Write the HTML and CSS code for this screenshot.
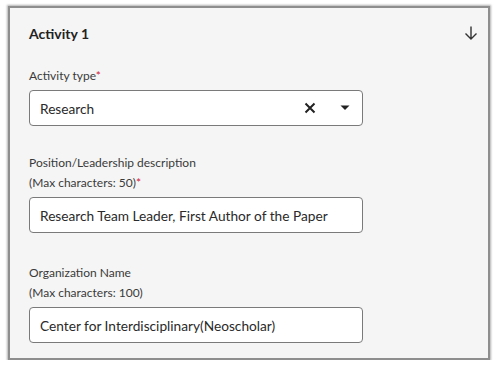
FILE: index.html
```html
<!DOCTYPE html>
<html>
<head>
    <title>Activity</title>
    <link rel="stylesheet" href="styles.css">
</head>
<body>
    <div class="card">
        <div class="card-header">
            <h2>Activity 1</h2>
            <svg class="collapse-icon" width="16" height="16" viewBox="0 0 16 16">
                <path d="M8 1.5 V14 M2.5 8.5 L8 14 L13.5 8.5" fill="none" stroke="#333" stroke-width="1.4"/>
            </svg>
        </div>

        <div class="form-group first">
            <label>Activity type<span class="req">*</span></label>
            <div class="select">
                <span class="value">Research</span>
                <svg class="clear-icon" width="12" height="12" viewBox="0 0 12 12">
                    <path d="M1.5 1.5 L10.5 10.5 M10.5 1.5 L1.5 10.5" stroke="#222" stroke-width="2"/>
                </svg>
                <svg class="caret-icon" width="10" height="6" viewBox="0 0 10 6">
                    <path d="M0.5 0.5 H9.5 L5 5 Z" fill="#222"/>
                </svg>
            </div>
        </div>

        <div class="form-group">
            <label>Position/Leadership description</label>
            <label>(Max characters: 50)<span class="req">*</span></label>
            <input type="text" value="Research Team Leader, First Author of the Paper">
        </div>

        <div class="form-group last">
            <label>Organization Name</label>
            <label>(Max characters: 100)</label>
            <input type="text" value="Center for Interdisciplinary(Neoscholar)">
        </div>
    </div>
</body>
</html>
```

FILE: styles.css
```css
body {
    font-family: 'Lato', 'Inter', sans-serif;
    margin: 0;
    padding: 6px 0 0 8px;
    background-color: #ffffff;
}
.card {
    width: 482px;
    height: 354px;
    box-sizing: border-box;
    background-color: #f5f5f5;
    border: 2px solid #8e8e8e;
    box-shadow: 0 0 2px 1px #b0b0b0;
    padding: 15px 9px 0 19px;
    overflow: hidden;
}
.card-header {
    display: flex;
    justify-content: space-between;
    align-items: center;
    height: 20px;
}
.card-header h2 {
    margin: 0;
    font-size: 14px;
    font-weight: 700;
    color: #222;
}
.form-group {
    width: 334px;
    margin-top: 27px;
}
.form-group.first {
    margin-top: 23px;
}
.form-group.last {
    margin-top: 30px;
}
label {
    display: block;
    font-size: 12px;
    line-height: 20px;
    color: #3a3a3a;
}
.req {
    color: #d0183a;
}
.select, input {
    margin-top: 4px;
    width: 100%;
    height: 36px;
    box-sizing: border-box;
    border: 1px solid #7a7a7a;
    border-radius: 4px;
    background-color: white;
    font-family: inherit;
    font-size: 13.7px;
    color: #2a2a2a;
    padding: 0 10px;
}
.select {
    display: flex;
    align-items: center;
}
.select .value {
    flex: 1;
}
.clear-icon {
    margin-right: 24px;
}
.caret-icon {
    margin-right: 2px;
}
```
